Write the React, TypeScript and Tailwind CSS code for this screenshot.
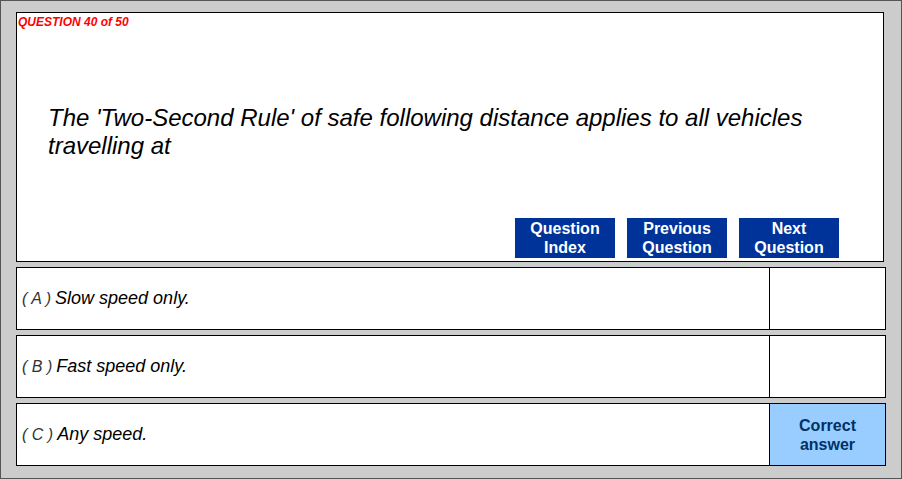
const answers = [
  { letter: "A", text: "Slow speed only.", correct: false },
  { letter: "B", text: "Fast speed only.", correct: false },
  { letter: "C", text: "Any speed.", correct: true },
];

function NavButton({ top, bottom }: { top: string; bottom: string }) {
  return (
    <button
      type="button"
      className="w-[100px] h-[40px] bg-[#003399] text-white font-bold text-[16px] leading-[19px] flex flex-col items-center justify-center"
    >
      <span>{top}</span>
      <span>{bottom}</span>
    </button>
  );
}

export default function App() {
  return (
    <div
      className="w-[902px] h-[479px] bg-[#cccccc] border border-[#555555] pl-[15px] pt-[11px]"
      style={{ fontFamily: '"Liberation Sans", Arial, sans-serif' }}
    >
      {/* Question panel */}
      <div className="w-[868px] h-[250px] bg-white border border-black flex flex-col">
        <div className="pt-[2px] pl-[1px] text-[12px] leading-[14px] font-bold italic text-[#ff0000]">
          QUESTION 40 of 50
        </div>
        <p className="mt-[75px] pl-[31px] pr-[40px] text-[24px] leading-[28px] italic text-black">
          The 'Two-Second Rule' of safe following distance applies to all vehicles travelling at
        </p>
        <div className="mt-auto flex justify-end gap-[12px] pr-[44px] pb-[3px]">
          <NavButton top="Question" bottom="Index" />
          <NavButton top="Previous" bottom="Question" />
          <NavButton top="Next" bottom="Question" />
        </div>
      </div>

      {/* Answers */}
      <div className="mt-[5px] flex flex-col gap-[5px]">
        {answers.map((a) => (
          <div
            key={a.letter}
            className="w-[870px] h-[63px] bg-white border border-black flex"
          >
            <div className="flex-1 flex items-center pl-[5px] italic text-black">
              <span className="text-[16px] text-[#333333] mr-[4px]">( {a.letter} )</span>
              <span className="text-[18px]">{a.text}</span>
            </div>
            <div
              className={
                a.correct
                  ? "w-[116px] border-l border-black bg-[#99ccff] flex flex-col items-center justify-center text-[16px] leading-[19px] font-bold text-[#003366]"
                  : "w-[116px] border-l border-black"
              }
            >
              {a.correct && (
                <>
                  <span>Correct</span>
                  <span>answer</span>
                </>
              )}
            </div>
          </div>
        ))}
      </div>
    </div>
  );
}
